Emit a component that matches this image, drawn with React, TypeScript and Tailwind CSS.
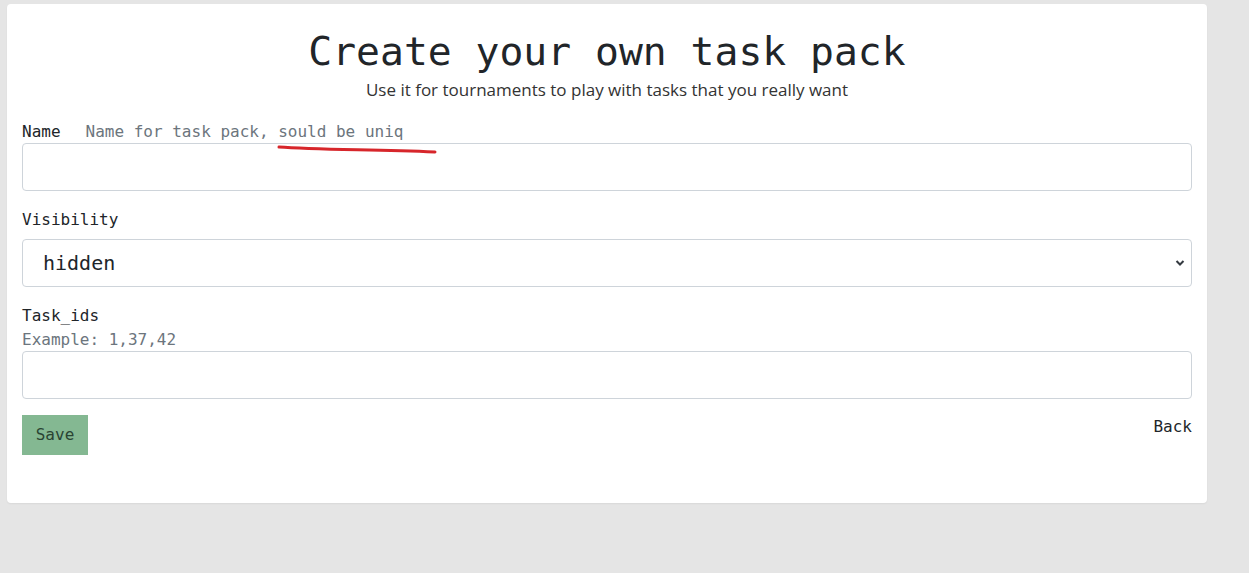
import React from "react";

export default function App() {
  const mono = { fontFamily: '"DejaVu Sans Mono", "Liberation Mono", monospace' };
  return (
    <div className="min-h-[573px] w-full bg-[#e5e5e5] pt-[4px] pl-[7px]" style={mono}>
      <div className="relative w-[1200px] rounded-[4px] bg-white px-[15px] pt-[23px] pb-[48px] text-[#212529] shadow-[0_1px_2px_rgba(0,0,0,0.06)]">
        <h1 className="text-center text-[39.7px] leading-[48px] text-[#212529]">Create your own task pack</h1>
        <p className="mt-[3px] text-center text-[17px] leading-[24px] text-[#333]" style={{ fontFamily: '"Open Sans", Lato, sans-serif', fontWeight: 400 }}>
          Use it for tournaments to play with tasks that you really want
        </p>

        <div className="mt-[19px] flex items-center text-[16px] leading-[22px]">
          <span className="text-[#212529]">Name</span>
          <span className="ml-[25px] text-[#6c757d]">Name for task pack, sould be uniq</span>
        </div>
        <input className="block h-[48px] w-full rounded-[4px] border border-[#ced4da] bg-white px-3 outline-none" />

        <div className="mt-[17px] text-[16px] leading-[24px]">Visibility</div>
        <div className="relative mt-[7px]">
          <select
            className="block h-[48px] w-full appearance-none rounded-[4px] border border-[#ced4da] bg-white pl-[20px] text-[20px] text-[#212529] outline-none"
            style={mono}
            defaultValue="hidden"
          >
            <option value="hidden">hidden</option>
            <option value="public">public</option>
          </select>
          <svg className="pointer-events-none absolute right-[7px] top-[20px]" width="10" height="8" viewBox="0 0 10 8">
            <path d="M1.5 2 L5 5.5 L8.5 2" fill="none" stroke="#343a40" strokeWidth="2" />
          </svg>
        </div>

        <div className="mt-[17px] text-[16px] leading-[24px]">Task_ids</div>
        <div className="text-[16px] leading-[24px] text-[#6c757d]">Example: 1,37,42</div>
        <input className="mt-[-1px] block h-[48px] w-full rounded-[4px] border border-[#ced4da] bg-white px-3 outline-none" />

        <div className="mt-[16px] flex items-start justify-between">
          <button className="h-[40px] w-[66px] bg-[#84b892] text-[16px] text-[#2a4433]" style={mono}>Save</button>
          <a className="mt-[0px] text-[16px] leading-[24px] text-[#212529]">Back</a>
        </div>

        <svg className="pointer-events-none absolute left-[265px] top-[137px]" width="170" height="14" viewBox="0 0 170 14">
          <path d="M7 6 C 40 8.5, 90 8.5, 163 11" fill="none" stroke="#d7262b" strokeWidth="3" strokeLinecap="round" />
        </svg>
      </div>
    </div>
  );
}
